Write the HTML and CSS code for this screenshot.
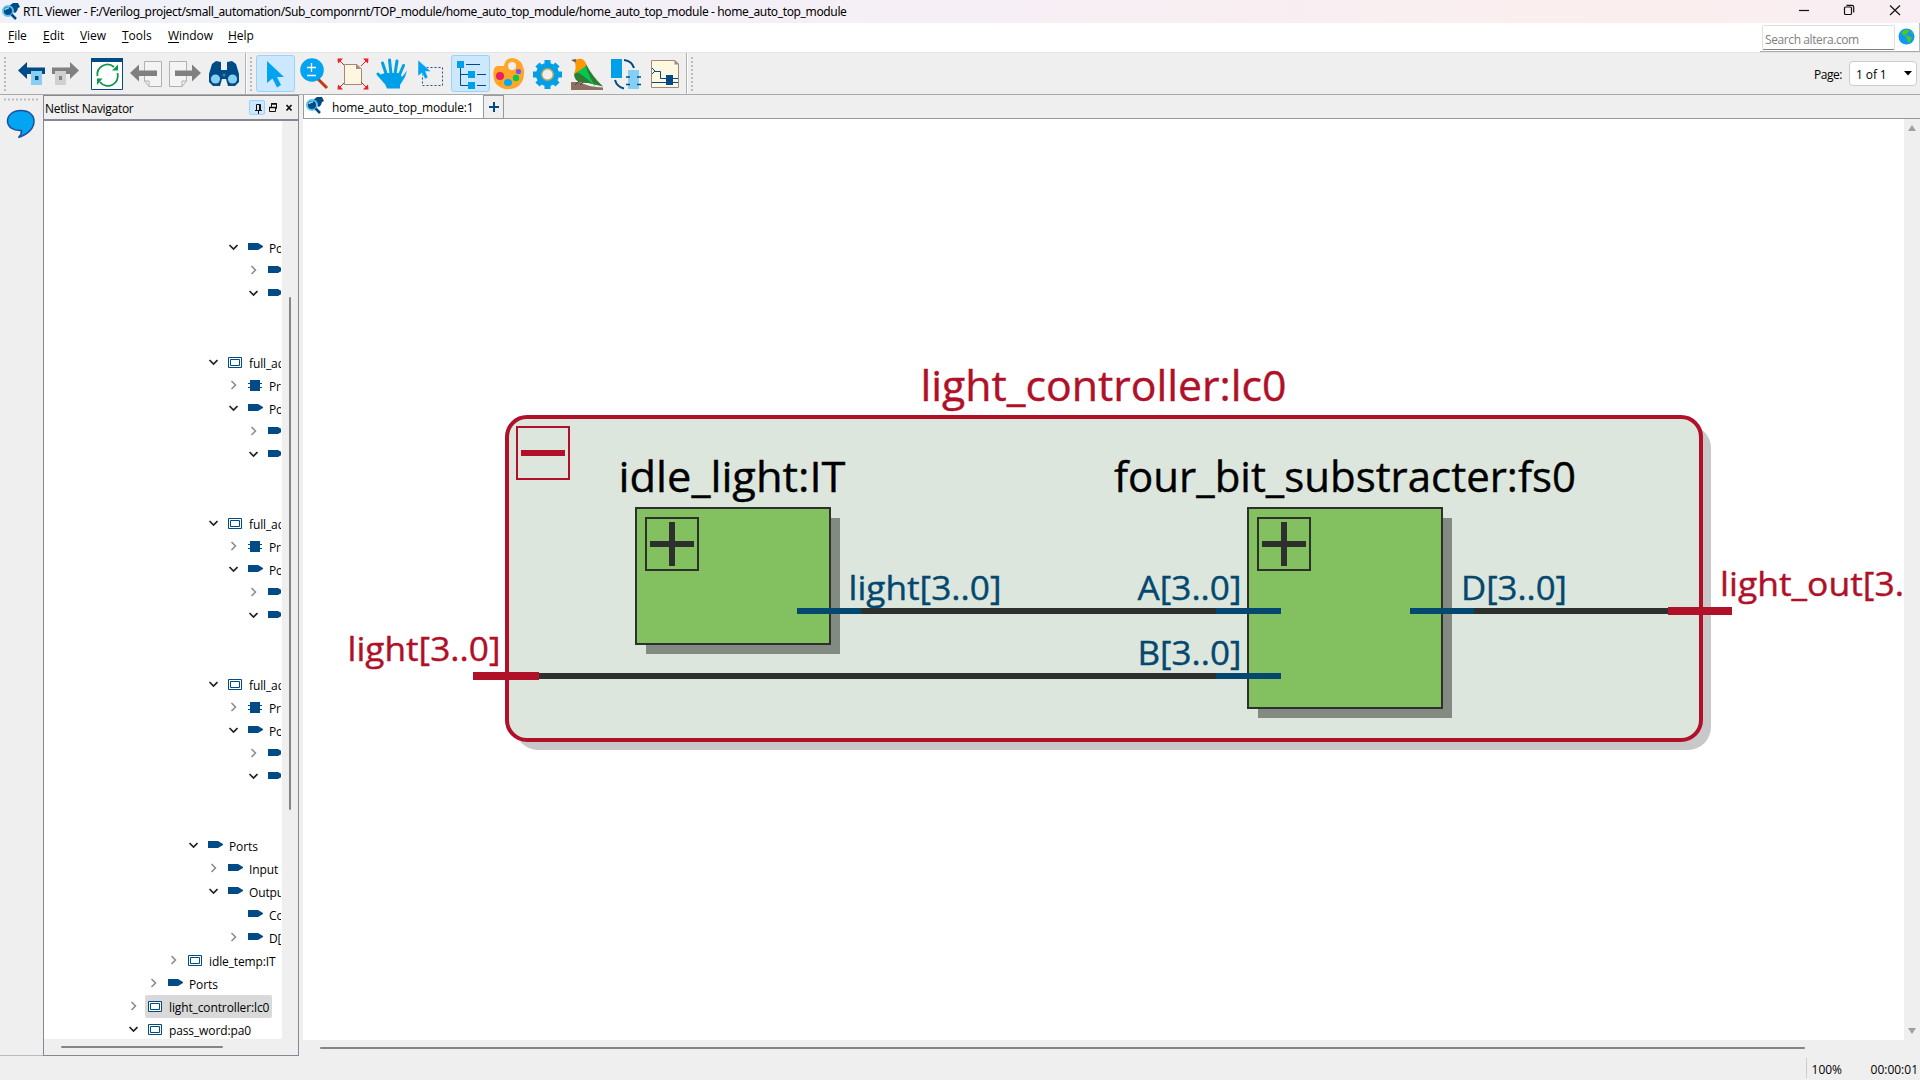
FILE: index.html
```html
<!DOCTYPE html>
<html lang="en">
<head>
<meta charset="utf-8">
<title>RTL Viewer</title>
<link rel="stylesheet" href="styles.css">
</head>
<body>
<svg class="defs" width="0" height="0" aria-hidden="true">
  <defs>
    <g id="logo">
      <path d="M8 4 L12 1 L17 1 L19 5 L17 6 L16 9 L14 11 L11 9 L8 8 Z" fill="#004a86"/>
      <circle cx="7" cy="9" r="5" fill="#004a86" stroke="#5cc3f0" stroke-width="2"/>
      <path d="M10.500 12.500 L15 17" stroke="#004a86" stroke-width="2.500"/>
      <path d="M4 8 Q5 5.500 8 6" stroke="#9adcf8" stroke-width="1.500" fill="none"/>
    </g>
    <path id="port" d="M0 0 H10 L15 3 V4 L10 7 H0 Z" fill="#004a86"/>
    <g id="inst" fill="#fff" stroke="#004a86"><path d="M.5 .5 H13.500 V10.500 H.5 Z"/><path d="M2.500 2.500 H11.500 V8.500 H2.500 Z"/></g>
    <g id="prim"><path d="M2 0 H12 V11 H2 Z" fill="#004a86"/><path d="M0 3.500 H14 M0 7.500 H14" stroke="#004a86"/></g>
    <path id="open" d="M1.500 3 L5.500 7 L9.500 3" fill="none" stroke="#222" stroke-width="1.700"/>
    <path id="closed" d="M3.500 1 L7.500 5 L3.500 9" fill="none" stroke="#888" stroke-width="1.500"/>
  </defs>
</svg>
<div class="window">
  <header class="titlebar">
    <svg width="20" height="20" viewBox="0 0 20 20"><use href="#logo"/></svg>
    <span class="title">RTL Viewer - F:/Verilog_project/small_automation/Sub_componrnt/TOP_module/home_auto_top_module/home_auto_top_module - home_auto_top_module</span>
    <svg class="winbtns" width="120" height="23" viewBox="1790 0 120 23" fill="none" stroke="#111" stroke-width="1.200">
      <path d="M1799 10.500 H1809"/>
      <rect x="1844.500" y="7" width="7" height="7.500" rx="1"/><path d="M1846.500 5.300 H1852 Q1853.700 5.300 1853.700 7 V12.500"/>
      <path d="M1890 5.500 L1900 15 M1900 5.500 L1890 15"/>
    </svg>
  </header>
  <nav class="menubar">
    <span class="m-file"><u>F</u>ile</span><span class="m-edit"><u>E</u>dit</span><span class="m-view"><u>V</u>iew</span><span class="m-tools"><u>T</u>ools</span><span class="m-window"><u>W</u>indow</span><span class="m-help"><u>H</u>elp</span>
    <div class="search"><div class="field">Search altera.com</div>
      <svg width="18" height="18" viewBox="0 0 18 18"><circle cx="8.500" cy="8.500" r="8" fill="#0a9bf0"/><path d="M3.500 4 Q6.500 1 10 1.500 L12 3 L10 4 L9 6.500 L7 6 L7.500 8.500 L5 7 Z M7.500 8.500 L10 7.500 L14 9.500 L13 12 L10.500 15.500 L9.500 12 Z M13.500 3 L15.500 6 L13.500 6 Z" fill="#57c421"/></svg>
    </div>
  </nav>
  <div class="toolbar">
    <svg width="14" height="37" viewBox="0 55 14 37"><path d="M5 57 V92" stroke="#bbb" stroke-width="2" stroke-dasharray="2 2"/></svg>
    <svg width="34" height="37" viewBox="14 55 34 37"><path d="M18 70.500 L27 62 V67.500 H45 V74 H27 V79 Z" fill="#004a86"/><path d="M31 71 H42 V85 H31 Z" fill="#87cff2"/><path d="M35 76 H38.500 V80 H35 Z" fill="#004a86"/></svg>
    <svg width="39" height="37" viewBox="48 55 39 37"><path d="M79 70.500 L70 62 V67.500 H52 V74 H70 V79 Z" fill="#808080"/><path d="M55 71 H66 V85 H55 Z" fill="#d0d0d0"/><path d="M59 76 H62 V80 H59 Z" fill="#808080"/></svg>
    <svg width="39" height="37" viewBox="87 55 39 37"><path d="M91.500 59.500 H122.500 V89.500 H91.500 Z" fill="#fff" stroke="#004a86"/><path d="M91 58 H123 V62 H91 Z" fill="#004a86"/><path d="M97.500 76 A10 10 0 0 1 114 67 M117.500 73 A10 10 0 0 1 100 82" fill="none" stroke="#0c9750" stroke-width="1.800"/><path d="M112 70.500 H118 V64.500 Z M102.500 78.500 H97 V85 Z" fill="#0c9750"/></svg>
    <svg width="39" height="37" viewBox="126 55 39 37"><path d="M144.500 61.500 H161.500 V86.500 H149 L144.500 81 Z" fill="#f4f4f4" stroke="#b0b0b0"/><path d="M144.500 81 H149 V86.500" fill="none" stroke="#b0b0b0"/><path d="M130 73 L139 64.500 V70.500 H157 V76 H139 V81.500 Z" fill="#808080"/></svg>
    <svg width="39" height="37" viewBox="165 55 39 37"><path d="M169.500 61.500 H186.500 V81 L182 86.500 H169.500 Z" fill="#f4f4f4" stroke="#b0b0b0"/><path d="M186.500 81 H182 V86.500" fill="none" stroke="#b0b0b0"/><path d="M201 73 L192 64.500 V70.500 H175 V76 H192 V81.500 Z" fill="#808080"/></svg>
    <svg width="39" height="37" viewBox="204 55 39 37"><path d="M212 64 L216 61 L221 62 V70 H227 V62 L232 61 L236 64 L239 74 V82 L235 86 H228 L226 79 H222 L220 86 H213 L209 82 V74 Z" fill="#004a86"/><circle cx="215.500" cy="79" r="4.600" fill="#87cff2"/><circle cx="232.500" cy="79" r="4.600" fill="#87cff2"/><circle cx="224" cy="75" r="1.500" fill="#2b87c0"/></svg>
    <svg class="sep" width="13" height="41" viewBox="243 53 13 41"><path d="M245.500 53 V94" stroke="#b0b0b0"/><path d="M246.500 53 V94" stroke="#fff"/><path d="M251 57 V92" stroke="#bbb" stroke-width="2" stroke-dasharray="2 2"/></svg>
    <svg class="on" width="39" height="37" viewBox="256 55 39 37"><path d="M267 61 V83 L272.500 78.500 L277 87.500 L281 85 L277 77 H284 Z" fill="#00a4f0"/></svg>
    <svg width="39" height="37" viewBox="295 55 39 37"><path d="M317 78 L327 88" stroke="#c23a10" stroke-width="3"/><circle cx="312" cy="70" r="11.800" fill="#03a5f3"/><path d="M307 67.500 H316 M311.500 63 V72 M307 75.500 H316" stroke="#fff" stroke-width="1.300"/></svg>
    <svg width="39" height="37" viewBox="334 55 39 37"><path d="M344.500 64.500 H357 L361.500 69 V84.500 H344.500 Z" fill="#fff6df" stroke="#a1887f"/><path d="M356 64 V69 H361 Z" fill="#a1887f"/><g stroke="#ed1c24" fill="#ed1c24"><path d="M339 60 L344 65 M367 60 L361 66 M339 88 L344 83 M367 88 L361 82"/><path d="M337.500 58.500 H343 L338 63.500 Z M368.500 58.500 H363 L368 63.500 Z M337.500 89.500 H343 L338 84.500 Z M368.500 89.500 H363 L368 84.500 Z" stroke="none"/></g></svg>
    <svg width="39" height="37" viewBox="373 55 39 37"><path d="M385 82 L378 74" stroke="#00a0e9" stroke-width="3" stroke-linecap="round"/><path d="M386.500 75 L382.500 63 M391 74 L389.500 60 M395 74 L397 61 M399 76 L403.500 65.500" stroke="#00a0e9" stroke-width="3" stroke-linecap="round"/><path d="M385 73 L400 73 L402 77 L407 70.500 L405 77 L400 85 V88.500 H387 L385 84 L379 75 Z" fill="#00a0e9"/></svg>
    <svg width="39" height="37" viewBox="412 55 39 37"><path d="M422.500 67.500 H442.500 V85.500 H422.500 Z" fill="none" stroke="#1c4f9c" stroke-dasharray="2 2"/><path d="M418 60 V76 L422 73 L425 79 L428 77.500 L425.500 71.500 H431 Z" fill="#00a4f0" stroke="#efefef" stroke-width=".5"/></svg>
    <svg class="on" width="39" height="37" viewBox="451 55 39 37"><path d="M460.500 66 V85.500 H470 M460.500 74.500 H470 M466 64.500 H480 M477 74.500 H486 M477 85.500 H486" stroke="#004a86" fill="none"/><path d="M457 61 H464 V68 H457 Z M468 71 H475 V78 H468 Z M468 82 H475 V89 H468 Z" fill="#00a0e9"/></svg>
    <svg width="39" height="37" viewBox="490 55 39 37"><path d="M504 66 Q505 58 513 58 Q522 59 524 70 Q525 84 515 88 Q504 92 496 84 Q492 78 494 69 Q496 65 500 66 Z" fill="#ffa626"/><circle cx="512" cy="66" r="4" fill="#efefef"/><circle cx="500" cy="76" r="4" fill="#e91e63"/><circle cx="518.500" cy="71.500" r="2.600" fill="#7c4dff"/><circle cx="516" cy="78" r="3.200" fill="#00c853"/><ellipse cx="508" cy="82.500" rx="4" ry="3.500" fill="#03a9f4"/></svg>
    <svg width="39" height="37" viewBox="529 55 39 37"><g stroke="#00a0e9" stroke-width="6"><path d="M547.500 60 V89 M533 74.500 H562 M537.500 64.500 L557.500 84.500 M557.500 64.500 L537.500 84.500"/></g><circle cx="547.500" cy="74.500" r="11.500" fill="#00a0e9"/><circle cx="547.500" cy="74.500" r="5.800" fill="#efefef" stroke="#c5a34b" stroke-width="1.400"/></svg>
    <svg width="39" height="37" viewBox="568 55 39 37"><path d="M571 82 H580 Q588 87 603 87.500 V90 H571 Z" fill="#8d6e63"/><path d="M577 68 Q572 75 576 80 Q580 83.500 588 83 L603 86.500 Q592 76 586 64 Z" fill="#2e7d32"/><path d="M574.500 61 Q577 58 582 59 Q587 62 586 66 Q581 71 574 74 Q577 68 574.500 61" fill="#ff9800"/><path d="M577 72 Q581 70 586 66 Q588 76 596 87 Q586 77 577 72 Z" fill="#00c853"/><path d="M571 60 L576 59 L575.500 62.500 Z" fill="#555"/><path d="M579 81 L575 85 M583 82 L580 85" stroke="#444"/></svg>
    <svg width="39" height="37" viewBox="607 55 39 37"><path d="M611 59 H622 V78 H611 Z" fill="#00a0e9"/><path d="M628 70 H639 V89 H628 Z" fill="#87cff2"/><path d="M626 77 H630 M626 84.500 H630 M637 77 H641 M637 84.500 H641" stroke="#004a86" stroke-width="1.500"/><path d="M624 60 Q632 61 634 68 M615 80 Q617 87 624 88.500" stroke="#004a86" stroke-width="2" fill="none"/></svg>
    <svg width="39" height="37" viewBox="646 55 39 37"><path d="M651.500 60.500 H675 L678.500 64 V87.500 H651.500 Z" fill="#fff8e1" stroke="#a1887f"/><path d="M674.500 60 V64.500 H679 Z" fill="#a1887f"/><path d="M652 68 L655 71 L652 74 M655 71.500 H660.500 V78.500 H678 M652 82.500 H678" stroke="#004a86" fill="none"/><path d="M666 75 H673 V85 H666 Z" fill="#004a86"/></svg>
    <svg class="sep" width="13" height="41" viewBox="685 53 13 41"><path d="M686.500 53 V94" stroke="#b0b0b0"/><path d="M687.500 53 V94" stroke="#fff"/><path d="M692 57 V92" stroke="#bbb" stroke-width="2" stroke-dasharray="2 2"/></svg>
    <span class="pagelabel">Page:</span>
    <div class="select"><span>1 of 1</span><svg width="8" height="5" viewBox="0 0 8 5"><path d="M0 0 H8 L4 4.500 Z" fill="#000"/></svg></div>
  </div>
  <main class="work">
    <aside class="strip">
      <svg width="43" height="60" viewBox="0 95 43 60"><path d="M4 99.500 H39" stroke="#bbb" stroke-width="2" stroke-dasharray="2 2"/><path d="M21 110.500 C29 110.500 34 115 34 121 C34 129 28 134 18.500 137.500 Q22 134 21.500 130.500 C13 131 7.500 127 7.500 121 C7.500 115 13 110.500 21 110.500 Z" fill="#03a5f3" stroke="#1c4f9c" stroke-width="1.500"/></svg>
    </aside>
    <section class="panel">
      <div class="phead"><span>Netlist Navigator</span>
        <svg width="50" height="18" viewBox="248 98 50 18"><rect x="249.500" y="99.500" width="15" height="14" rx="1.500" fill="#cce8ff" stroke="#99d1ff"/><path d="M256.500 110 V103.500 H260.500 V110 M255 109.500 H262 M258.500 110 V113 M259.500 103 V110" stroke="#111" fill="none"/><path d="M269.500 106.500 H275.500 V110.500 H269.500 Z M271.500 106 V102.500 H276.500 V107.500 H275" stroke="#111" fill="none"/><path d="M269 106.500 H276 M271 103 H277" stroke="#111" stroke-width="1.500"/><path d="M286.500 104 L291.500 109.500 M291.500 104 L286.500 109.500" stroke="#111" stroke-width="1.700"/></svg>
      </div>
      <div class="pbody">
        <ul class="tree">
          <li></li><li></li><li></li><li></li><li></li>
          <li class="l5"><svg class="c"><use href="#open"/></svg><svg class="p"><use href="#port"/></svg><span>Ports</span></li>
          <li class="l6"><svg class="c"><use href="#closed"/></svg><svg class="p"><use href="#port"/></svg></li>
          <li class="l6"><svg class="c"><use href="#open"/></svg><svg class="p"><use href="#port"/></svg></li>
          <li></li><li></li>
          <li class="l4"><svg class="c"><use href="#open"/></svg><svg class="i"><use href="#inst"/></svg><span>full_adder</span></li>
          <li class="l5"><svg class="c"><use href="#closed"/></svg><svg class="i"><use href="#prim"/></svg><span>Primitives</span></li>
          <li class="l5"><svg class="c"><use href="#open"/></svg><svg class="p"><use href="#port"/></svg><span>Ports</span></li>
          <li class="l6"><svg class="c"><use href="#closed"/></svg><svg class="p"><use href="#port"/></svg></li>
          <li class="l6"><svg class="c"><use href="#open"/></svg><svg class="p"><use href="#port"/></svg></li>
          <li></li><li></li>
          <li class="l4"><svg class="c"><use href="#open"/></svg><svg class="i"><use href="#inst"/></svg><span>full_adder</span></li>
          <li class="l5"><svg class="c"><use href="#closed"/></svg><svg class="i"><use href="#prim"/></svg><span>Primitives</span></li>
          <li class="l5"><svg class="c"><use href="#open"/></svg><svg class="p"><use href="#port"/></svg><span>Ports</span></li>
          <li class="l6"><svg class="c"><use href="#closed"/></svg><svg class="p"><use href="#port"/></svg></li>
          <li class="l6"><svg class="c"><use href="#open"/></svg><svg class="p"><use href="#port"/></svg></li>
          <li></li><li></li>
          <li class="l4"><svg class="c"><use href="#open"/></svg><svg class="i"><use href="#inst"/></svg><span>full_adder</span></li>
          <li class="l5"><svg class="c"><use href="#closed"/></svg><svg class="i"><use href="#prim"/></svg><span>Primitives</span></li>
          <li class="l5"><svg class="c"><use href="#open"/></svg><svg class="p"><use href="#port"/></svg><span>Ports</span></li>
          <li class="l6"><svg class="c"><use href="#closed"/></svg><svg class="p"><use href="#port"/></svg></li>
          <li class="l6"><svg class="c"><use href="#open"/></svg><svg class="p"><use href="#port"/></svg></li>
          <li></li><li></li>
          <li class="l3"><svg class="c"><use href="#open"/></svg><svg class="p"><use href="#port"/></svg><span>Ports</span></li>
          <li class="l4"><svg class="c"><use href="#closed"/></svg><svg class="p"><use href="#port"/></svg><span>Input</span></li>
          <li class="l4"><svg class="c"><use href="#open"/></svg><svg class="p"><use href="#port"/></svg><span>Output</span></li>
          <li class="l5"><svg class="c"></svg><svg class="p"><use href="#port"/></svg><span>Cout</span></li>
          <li class="l5"><svg class="c"><use href="#closed"/></svg><svg class="p"><use href="#port"/></svg><span>D[3..0]</span></li>
          <li class="l2"><svg class="c"><use href="#closed"/></svg><svg class="i"><use href="#inst"/></svg><span>idle_temp:IT</span></li>
          <li class="l1"><svg class="c"><use href="#closed"/></svg><svg class="p"><use href="#port"/></svg><span>Ports</span></li>
          <li class="l0 sel"><svg class="c"><use href="#closed"/></svg><div class="pick"><svg class="i"><use href="#inst"/></svg><span>light_controller:lc0</span></div></li>
          <li class="l0"><svg class="c"><use href="#open"/></svg><svg class="i"><use href="#inst"/></svg><span>pass_word:pa0</span></li>
        </ul>
        <div class="vbar"><div class="vthumb"></div></div>
      </div>
      <div class="hbar"><div class="hthumb"></div></div>
    </section>
    <section class="view">
      <div class="tabs">
        <div class="tab"><svg width="20" height="20" viewBox="0 0 20 20"><use href="#logo"/></svg><span>home_auto_top_module:1</span></div>
        <div class="add"><svg width="10" height="10" viewBox="0 0 10 10"><path d="M5 0 V10 M0 5 H10" stroke="#004a86" stroke-width="2"/></svg></div>
      </div>
      <div class="stage">
        <svg class="canvas" width="1601" height="921" viewBox="303 119 1601 921">
          <rect x="515" y="425" width="1196" height="325" rx="23" fill="#c8c8c8"/>
          <rect x="507" y="417" width="1194" height="323" rx="20" fill="#dce6dc" stroke="#b01028" stroke-width="4"/>
          <rect x="517" y="427" width="52" height="52" fill="none" stroke="#b01028" stroke-width="2"/>
          <path d="M521 453 H565" stroke="#b01028" stroke-width="6"/>
          <path d="M646 518 H840 V654 H646 Z M1258 518 H1452 V718 H1258 Z" fill="#828a82"/>
          <g fill="#83c060" stroke="#2d302d" stroke-width="2">
            <rect x="636" y="508" width="194" height="136"/><rect x="646" y="518" width="52" height="52"/>
            <rect x="1248" y="508" width="194" height="200"/><rect x="1258" y="518" width="52" height="52"/>
          </g>
          <path d="M650 544 H694 M672 522 V566 M1262 544 H1306 M1284 522 V566 M861 611 H1216 M539 676 H1216 M1474 611 H1668" stroke="#2d302d" stroke-width="6"/>
          <path d="M797 611 H861 M1216 611 H1281 M1216 676 H1281 M1410 611 H1474" stroke="#04486f" stroke-width="6"/>
          <path d="M473 676 H539 M1668 611 H1732" stroke="#b01028" stroke-width="8"/>
          <g class="names">
            <text class="red" x="920.500" y="401" textLength="366" lengthAdjust="spacingAndGlyphs">light_controller:lc0</text>
            <text class="black" x="618.500" y="492" textLength="227" lengthAdjust="spacingAndGlyphs">idle_light:IT</text>
            <text class="black" x="1114" y="492" textLength="462" lengthAdjust="spacingAndGlyphs">four_bit_substracter:fs0</text>
          </g>
          <g class="pins red">
            <text x="347.500" y="661" textLength="153" lengthAdjust="spacingAndGlyphs">light[3..0]</text>
            <text x="1720" y="596" textLength="184" lengthAdjust="spacingAndGlyphs">light_out[3.</text>
          </g>
          <g class="pins blue">
            <text x="848.500" y="600" textLength="153" lengthAdjust="spacingAndGlyphs">light[3..0]</text>
            <text x="1137.500" y="600" textLength="104" lengthAdjust="spacingAndGlyphs">A[3..0]</text>
            <text x="1137.500" y="665" textLength="104" lengthAdjust="spacingAndGlyphs">B[3..0]</text>
            <text x="1461" y="600" textLength="106" lengthAdjust="spacingAndGlyphs">D[3..0]</text>
          </g>
        </svg>
        <div class="vscroll"><svg width="8" height="6" viewBox="0 0 8 6"><path d="M4 0 L8 6 H0 Z" fill="#a0a0a0"/></svg><svg width="8" height="6" viewBox="0 0 8 6"><path d="M0 0 H8 L4 6 Z" fill="#a0a0a0"/></svg></div>
      </div>
      <div class="hscroll"><div class="hthumb2"></div></div>
    </section>
  </main>
  <footer class="status"><span class="zoom">100%</span><span class="time">00:00:01</span></footer>
</div>
</body>
</html>
```
FILE: styles.css
```css
* { box-sizing: border-box; }
body { margin: 0; background: #efefef; font: 12px/16px "Open Sans", "Noto Sans", sans-serif; color: #000; overflow: hidden; }
svg { display: block; flex: none; }
.defs { position: absolute; }
.window { width: 1920px; height: 1080px; display: flex; flex-direction: column; overflow: hidden; white-space: nowrap; }
.titlebar { height: 23px; flex: none; display: flex; align-items: center; background: linear-gradient(90deg, #f0f2f9, #f5eff6 45%, #fbeeee 85%, #f8eef3); padding-left: 1px; }
.title { margin-left: 2px; padding-top: 1px; font-family: "Noto Sans", sans-serif; letter-spacing: -0.365px; }
.winbtns { margin-left: auto; margin-right: 10px; }
.menubar { height: 30px; flex: none; display: flex; background: #fff; border-bottom: 1px solid #e4e4e4; padding: 5px 0 0 8px; letter-spacing: -0.05px; }
.menubar > span { flex: none; }
.menubar u { text-underline-offset: 2px; }
.m-file { width: 35px; } .m-edit { width: 37px; } .m-view { width: 42px; } .m-tools { width: 46px; } .m-window { width: 60px; } .m-help { width: 40px; }
.search { margin: -5px 0 0 auto; width: 160px; height: 29px; border-bottom: 1px solid #aaa; border-right: 1px solid #bbb; display: flex; align-items: center; gap: 3px; padding-left: 2px; }
.field { width: 133px; height: 25px; border: 1px solid #e0e0e0; border-bottom: 1px solid #808080; border-radius: 2px; color: #808080; padding: 6px 0 0 2px; letter-spacing: -0.4px; }
.toolbar { height: 42px; flex: none; display: flex; align-items: center; border-bottom: 1px solid #aaa; }
.on { background: #cce8ff; outline: 1px solid #99d1ff; outline-offset: -1px; border-radius: 3px; }
.pagelabel { margin-left: auto; margin-right: 7px; padding-top: 2px; letter-spacing: -0.45px; }
.select { width: 68px; height: 25px; margin-right: 3px; border: 1px solid #ccc; border-radius: 4px; background: #fff; display: flex; align-items: center; justify-content: space-between; padding: 0 4px 0 6px; }
.select span { padding-top: 2px; letter-spacing: -0.1px; }
.work { height: 961px; flex: none; display: flex; }
.strip { width: 43px; flex: none; border-bottom: 1px solid #bbb; }
.panel { width: 256px; flex: none; border: 1px solid #868694; border-top: 0; display: flex; flex-direction: column; }
.phead { height: 26px; flex: none; border-top: 1px solid #868694; border-bottom: 2px solid #868694; display: flex; align-items: center; justify-content: space-between; padding-left: 1px; }
.phead span { padding-top: 2px; letter-spacing: -0.3px; }
.pbody { height: 918px; flex: none; display: flex; }
.tree { list-style: none; margin: 0; padding: 0; width: 238px; background: #fff; border-right: 1px solid #fff; overflow: hidden; border-radius: 0 0 2px 0; letter-spacing: -0.12px; }
.tree li { height: 23px; display: flex; align-items: flex-start; }
.tree span { padding-top: 5px; }
.c { width: 10px; height: 10px; margin: 6px 10px 0 0; }
.p { width: 15px; height: 8px; margin: 7px 6px 0 0; }
.i { width: 14px; height: 11px; margin: 6px 7px 0 0; }
.l0 { padding-left: 84px; } .l1 { padding-left: 104px; } .l2 { padding-left: 124px; } .l3 { padding-left: 144px; } .l4 { padding-left: 164px; } .l5 { padding-left: 184px; } .l6 { padding-left: 204px; }
.sel .c { margin-right: 7px; }
.pick { display: flex; width: 127px; height: 23px; padding-left: 3px; background: #d9d9d9; border-radius: 2px; }
.vbar { width: 16px; padding: 176px 0 0 7px; }
.vthumb { width: 2px; height: 513px; background: #858585; border-radius: 1px; }
.hbar { flex: 1; padding: 7px 0 0 17px; }
.hthumb { width: 162px; height: 2px; background: #858585; border-radius: 1px; }
.view { flex: 1; padding-left: 4px; min-width: 0; }
.tabs { height: 24px; display: flex; border-bottom: 1px solid #999; }
.tab { width: 180px; height: 23px; background: #fff; border-left: 1px solid #999; display: flex; align-items: center; padding-left: 1px; }
.tab svg { margin-top: -2px; }
.tab span { margin-left: 7px; padding-top: 2px; letter-spacing: -0.18px; }
.add { width: 21px; border: 1px solid #999; border-bottom: 0; display: flex; align-items: center; justify-content: center; }
.stage { display: flex; height: 921px; }
.canvas { background: #fff; font-family: "Open Sans", sans-serif; }
.names { font-size: 42px; }
.pins { font-size: 33.5px; }
.names text, .pins text { stroke-width: 0.4px; }
.red { fill: #b01028; stroke: #b01028; }
.blue { fill: #04486f; stroke: #04486f; }
.black { fill: #000; stroke: #000; }
.vscroll { width: 16px; display: flex; flex-direction: column; justify-content: space-between; align-items: center; padding: 6px 0; }
.hscroll { padding: 7px 0 0 17px; }
.hthumb2 { width: 1485px; height: 2px; background: #858585; border-radius: 1px; }
.status { flex: 1; display: flex; justify-content: flex-end; align-items: stretch; padding: 2px 2px 2px 0; }
.zoom { border-left: 1px solid #ccc; padding: 4px 0 0 5px; width: 65px; }
.time { padding-top: 4px; }
```
